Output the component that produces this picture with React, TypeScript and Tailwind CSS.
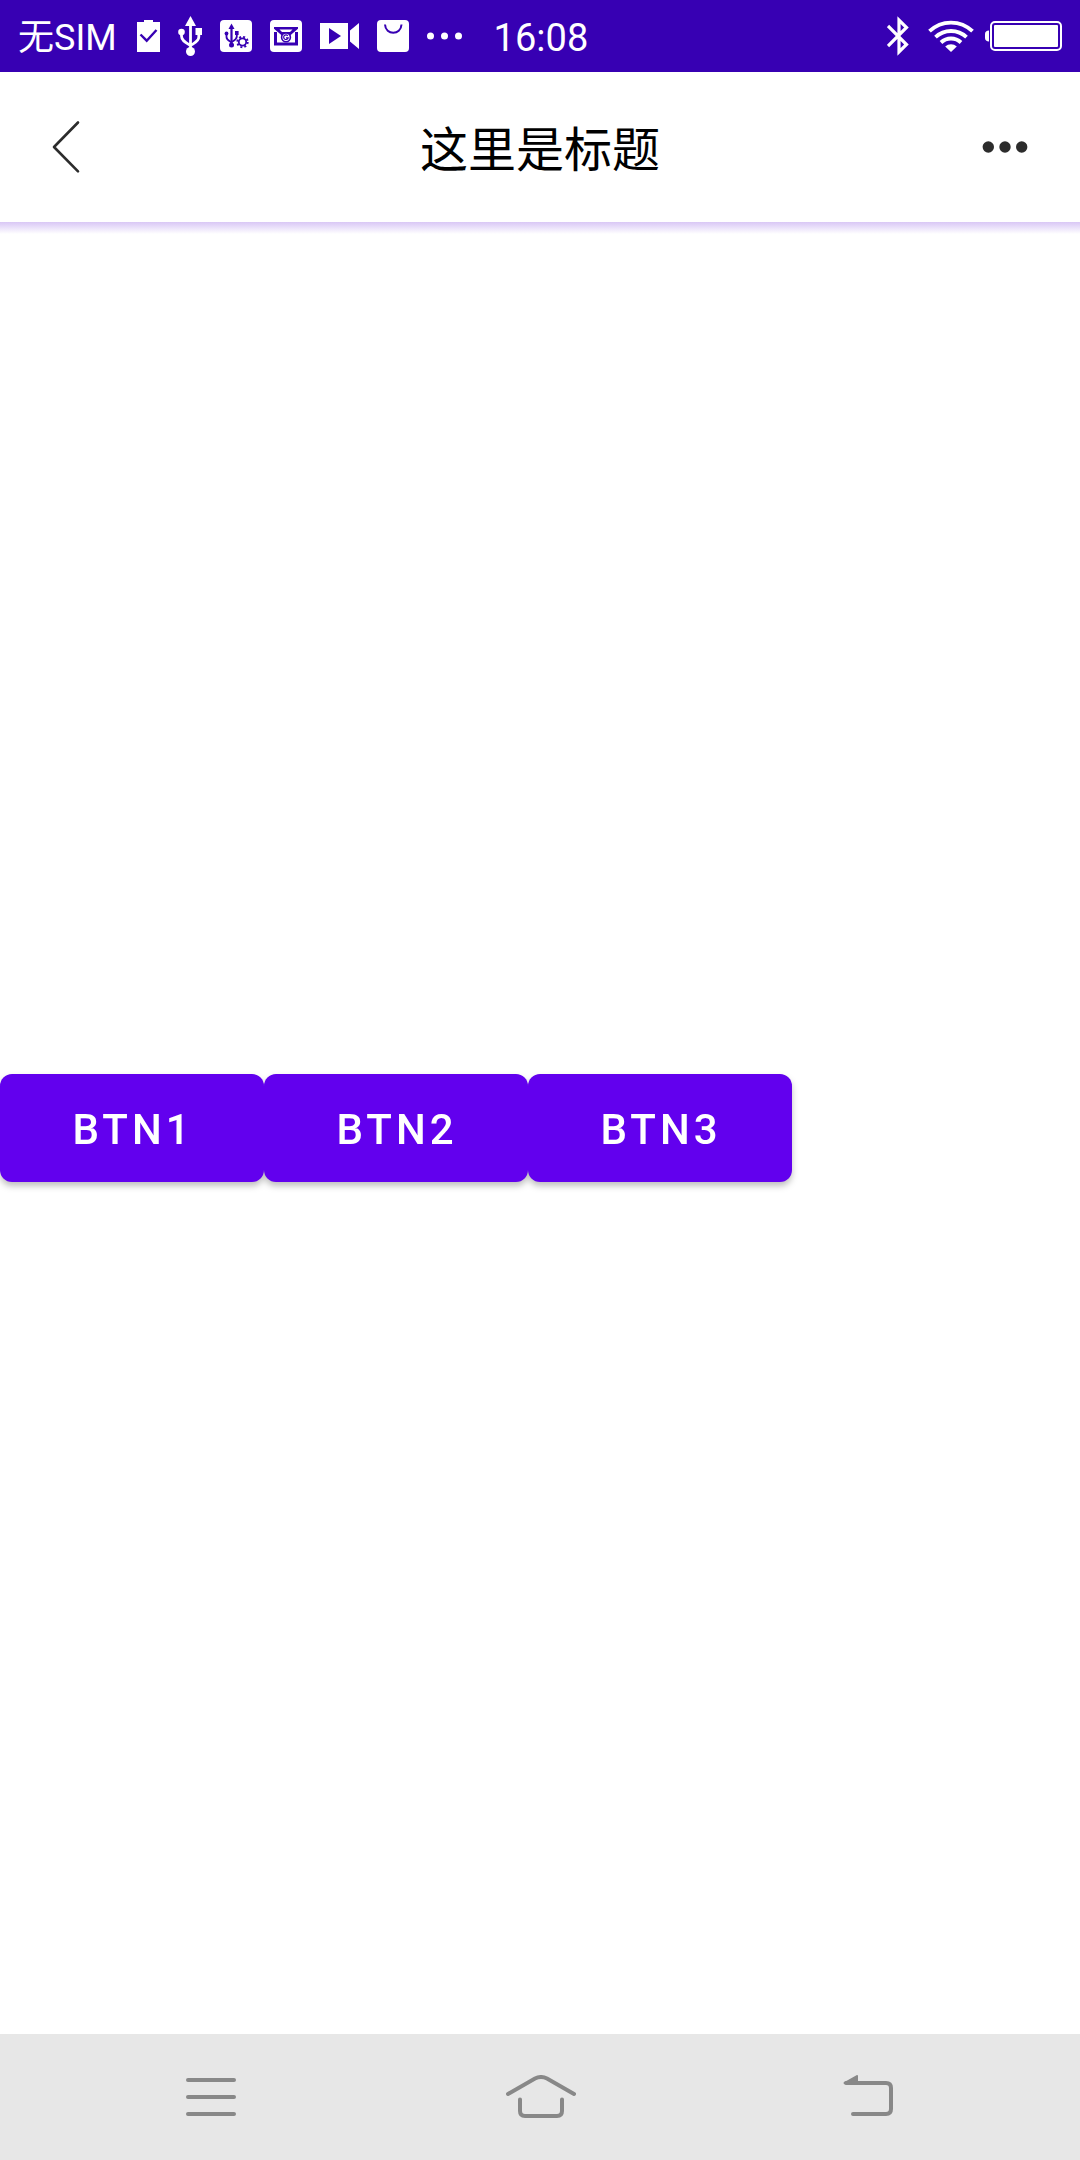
import React from "react";

const STATUS = "#3700b3";

function ClipboardIcon() {
  return (
    <svg width="23" height="32" viewBox="0 0 23 32" aria-hidden="true">
      <path d="M0 2h7V0h9v2h7v30H0z" fill="#fff" />
      <path d="M3.5 14.5l6.2 6.2L19.5 10" fill="none" stroke={STATUS} strokeWidth="2.4" />
    </svg>
  );
}

function UsbIcon() {
  return (
    <svg width="24" height="40" viewBox="0 0 24 40" aria-hidden="true">
      <path d="M12.5 0l5.5 10H7z" fill="#fff" />
      <circle cx="12.5" cy="35.5" r="4.5" fill="#fff" />
      <circle cx="3.5" cy="16" r="3.3" fill="#fff" />
      <rect x="17.5" y="12" width="6.5" height="7" fill="#fff" />
      <path
        d="M12.5 8v26M3.5 17v3c0 5 5 7 9 9.5M20.8 17v4c0 4.5-4.5 6-8.3 8.5"
        fill="none"
        stroke="#fff"
        strokeWidth="2.8"
      />
    </svg>
  );
}

function UsbSettingsIcon() {
  return (
    <svg width="32" height="32" viewBox="0 0 32 32" aria-hidden="true">
      <rect width="32" height="32" rx="4" fill="#fff" />
      <g fill={STATUS}>
        <path d="M11.5 3.5l3 5.5h-6z" />
        <circle cx="11.5" cy="25" r="2.5" />
        <circle cx="6.5" cy="13.5" r="1.9" />
        <rect x="15" y="11" width="3.6" height="4" />
      </g>
      <g fill="none" stroke={STATUS}>
        <path d="M11.5 8v16" strokeWidth="2.2" />
        <path d="M6.5 14v3c0 3 3 4 5 5.5M16.8 14v2.5c0 3-3 4-5.3 5.5" strokeWidth="1.8" />
        <circle cx="22.5" cy="22" r="3.7" strokeWidth="1.8" />
        <circle cx="22.5" cy="22" r="5.2" strokeWidth="1.9" strokeDasharray="2 2.084" />
      </g>
    </svg>
  );
}

function MailIcon() {
  return (
    <svg width="32" height="32" viewBox="0 0 32 32" aria-hidden="true">
      <rect width="32" height="32" rx="4" fill="#fff" />
      <path d="M4 7h24v1.800L19.500 16h-7L4 8.800z" fill={STATUS} />
      <path d="M9.500 9.500h13L20 12h-8z" fill="#fff" />
      <path d="M5.500 12v12h21V12" fill="none" stroke={STATUS} strokeWidth="3" />
      <circle cx="16" cy="17.300" r="4.400" fill="#fff" stroke={STATUS} strokeWidth="1.600" />
      <path d="M17.800 15.800a2.300 2.300 0 1 0 .4 2H16" fill="none" stroke={STATUS} strokeWidth="1.200" />
    </svg>
  );
}

function VideoIcon() {
  return (
    <svg width="39" height="26" viewBox="0 0 39 26" aria-hidden="true">
      <path d="M0 0h28v26H0zM30 7.500L39 0v26l-9-7.500z" fill="#fff" />
      <path d="M9 5l12 8-12 8z" fill={STATUS} />
    </svg>
  );
}

function BagIcon() {
  return (
    <svg width="32" height="32" viewBox="0 0 32 32" aria-hidden="true">
      <rect width="32" height="32" rx="4" fill="#fff" />
      <path d="M8 4.500c.5 11 16 11 16.500 0" fill="none" stroke={STATUS} strokeWidth="2" />
    </svg>
  );
}

function SmallDotsIcon() {
  return (
    <svg width="35" height="8" viewBox="0 0 35 8" fill="#fff" aria-hidden="true">
      <circle cx="3.5" cy="4" r="3.5" />
      <circle cx="17.5" cy="4" r="3.5" />
      <circle cx="31.5" cy="4" r="3.5" />
    </svg>
  );
}

function BluetoothIcon() {
  return (
    <svg width="22" height="40" viewBox="0 0 22 40" fill="none" aria-hidden="true">
      <path d="M1 10l18.500 18.500-7.500 7.500v-32l7.500 7.500L1 30" stroke="#fff" strokeWidth="3.200" />
    </svg>
  );
}

function WifiIcon() {
  return (
    <svg width="46" height="32" viewBox="0 0 46 32" fill="none" aria-hidden="true">
      <g stroke="#fff" strokeWidth="3.8">
        <path d="M1.500 11.200a31 31 0 0 1 43 0" />
        <path d="M7.500 17.200a22.500 22.500 0 0 1 31 0" />
        <path d="M13 22.500a14.500 14.500 0 0 1 20 0" />
      </g>
      <path d="M17.200 26.500a8.500 8.500 0 0 1 11.600 0L23 32z" fill="#fff" />
    </svg>
  );
}

function BatteryIcon() {
  return (
    <svg width="77" height="30" viewBox="0 0 77 30" aria-hidden="true">
      <path d="M4 9.500v11C1.500 20.500 0 19 0 17v-4c0-2 1.500-3.500 4-3.500z" fill="#fff" />
      <rect x="6" y="1" width="70" height="28" rx="4" fill="none" stroke="#fff" strokeWidth="2" />
      <rect x="9" y="4" width="64" height="22" rx="1" fill="#fff" />
    </svg>
  );
}

function StatusBar() {
  return (
    <div className="flex h-[72px] shrink-0 items-center justify-between bg-[#3700b3] px-[18px] text-white">
      <div className="flex items-center gap-[18px]">
        <span className="mr-0.5 pt-1 text-[36px] leading-[42px]">无SIM</span>
        <ClipboardIcon />
        <UsbIcon />
        <UsbSettingsIcon />
        <MailIcon />
        <VideoIcon />
        <BagIcon />
        <SmallDotsIcon />
        <time className="ml-3.5 pt-1 text-[38px] leading-[42px]">16:08</time>
      </div>
      <div className="flex items-center">
        <BluetoothIcon />
        <span className="w-[19px]" />
        <WifiIcon />
        <span className="w-[11px]" />
        <BatteryIcon />
      </div>
    </div>
  );
}

function TitleBar() {
  return (
    <header className="relative flex h-[150px] shrink-0 items-center justify-between px-[51px]">
      <button type="button" aria-label="Back" className="w-12">
        <svg width="30" height="54" viewBox="0 0 30 54" fill="none" aria-hidden="true">
          <path
            d="M27 2.500L3 27l24 24.300"
            stroke="#2c2c2c"
            strokeWidth="2.600"
            strokeLinecap="round"
            strokeLinejoin="round"
          />
        </svg>
      </button>
      <h1 className="pt-2 text-[48px] leading-[56px] text-black">这里是标题</h1>
      <button type="button" aria-label="More" className="w-12">
        <svg width="48" height="12" viewBox="0 0 48 12" fill="#2c2c2c" aria-hidden="true">
          <circle cx="7.3" cy="6" r="5.7" />
          <circle cx="24" cy="6" r="5.7" />
          <circle cx="40.7" cy="6" r="5.7" />
        </svg>
      </button>
      <div className="absolute inset-x-0 top-full h-3 bg-linear-to-b from-[#d9c7f5] to-white" />
    </header>
  );
}

function NavBar() {
  return (
    <nav className="flex h-[126px] shrink-0 items-center justify-between bg-[#e7e7e7] px-[186px]">
      <button type="button" aria-label="Menu" className="w-[52px]">
        <svg width="50" height="44" viewBox="0 0 50 44" aria-hidden="true">
          <path d="M2 5h46M2 22h46M2 39h46" stroke="#888" strokeWidth="4" strokeLinecap="round" />
        </svg>
      </button>
      <button type="button" aria-label="Home">
        <svg width="72" height="44" viewBox="-2 0 72 44" fill="none" aria-hidden="true">
          <g stroke="#888" strokeWidth="4" strokeLinecap="round">
            <path d="M2 19L29 3.500q6-3 12 0L68 19" />
            <path d="M14 24.500V36q0 5 5 5h32q5 0 5-5V24.500" />
          </g>
        </svg>
      </button>
      <button type="button" aria-label="Return" className="w-[52px]">
        <svg width="52" height="44" viewBox="0 0 52 44" fill="none" aria-hidden="true">
          <path
            d="M4 8h40q5 0 5 5v21q0 5-5 5H11"
            stroke="#888"
            strokeWidth="4"
            strokeLinecap="round"
          />
          <path d="M2.500 8L15 1v7z" fill="#888" stroke="#888" strokeWidth="2" strokeLinejoin="round" />
        </svg>
      </button>
    </nav>
  );
}

export default function App() {
  return (
    <div className="flex min-h-screen flex-col bg-white font-['Roboto','Noto_Sans_CJK_SC',sans-serif]">
      <StatusBar />
      <TitleBar />
      <main className="flex flex-1 items-center">
        <div className="flex drop-shadow-[0_4px_3px_rgba(0,0,0,0.25)]">
          {["BTN1", "BTN2", "BTN3"].map((label) => (
            <button
              key={label}
              type="button"
              className="h-[108px] w-[264px] rounded-xl bg-[#6200ee] pt-1 pl-0.5 text-[42px] leading-[48px] font-medium tracking-[4px] text-white"
            >
              {label}
            </button>
          ))}
        </div>
      </main>
      <NavBar />
    </div>
  );
}
